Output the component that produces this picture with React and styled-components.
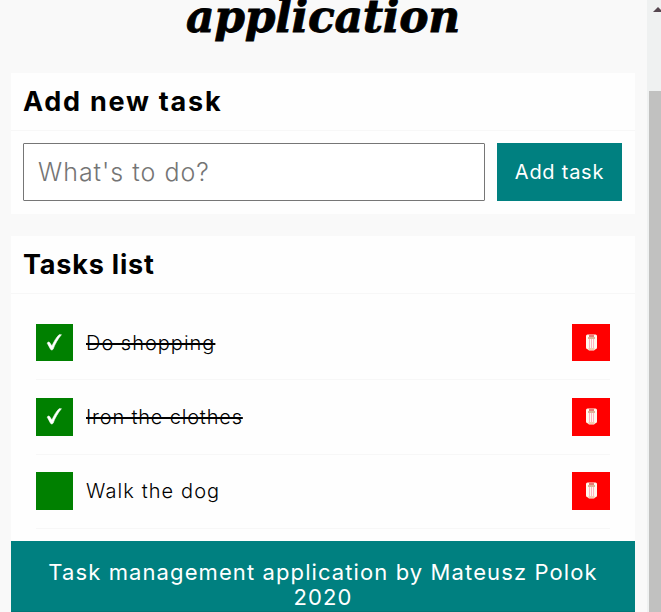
import React, { useState } from "react";
import styled, { createGlobalStyle } from "styled-components";

const GlobalStyle = createGlobalStyle`
  *, *::before, *::after { box-sizing: border-box; }
  html, body { margin: 0; height: 100%; overflow: hidden; }
  body { background: #f9f9f9; color: #000; font-family: Inter, "Open Sans", sans-serif; }
`;

const Viewport = styled.div`
  display: flex;
  height: 612px;
  overflow: hidden;
`;

const Main = styled.main`
  width: 647px;
  flex: none;
  display: flex;
  flex-direction: column;
  padding: 0 12px 0 11px;
`;

const Title = styled.h1`
  margin: 0;
  height: 73px;
  flex: none;
  text-align: center;
  font: italic bold 44px/34px "DejaVu Serif", serif;
  letter-spacing: -0.3px;
  -webkit-text-stroke: 0.8px #000;
  white-space: nowrap;
`;

const Card = styled.section`
  flex: none;
  height: ${(p) => p.$height}px;
  margin-bottom: ${(p) => p.$gap || 0}px;
  background: #fefefe;
`;

const CardTitle = styled.h2`
  margin: 0;
  height: 58px;
  padding-left: 12px;
  border-bottom: 1px solid #f7f7f7;
  font-size: 27px;
  font-weight: 700;
  line-height: 58px;
  letter-spacing: ${(p) => p.$spacing}px;
`;

const Form = styled.form`
  display: flex;
  gap: 12px;
  padding: 12px 13px 0 12px;
`;

const TaskInput = styled.input`
  width: 462px;
  height: 58px;
  border: 1px solid #767676;
  border-radius: 1px;
  padding: 0 14px;
  background: #fff;
  font: 300 25px Inter, sans-serif;
  letter-spacing: 1px;
  &::placeholder { color: #757575; }
`;

const AddButton = styled.button`
  width: 125px;
  height: 58px;
  border: 0;
  padding: 0;
  background: #008080;
  color: #fff;
  font: 400 20px Inter, sans-serif;
  letter-spacing: 0.75px;
`;

const TaskList = styled.ul`
  margin: 0;
  padding: 12.2px 25px 0;
  list-style: none;
`;

const TaskItem = styled.li`
  display: flex;
  align-items: center;
  height: 74.2px;
  padding: 17.5px 0 18px;
  border-bottom: 1px solid #f7f7f7;
`;

const IconButton = styled.button`
  display: flex;
  align-items: center;
  justify-content: center;
  width: ${(p) => p.$width}px;
  height: 37.7px;
  border: 0;
  padding: 0;
  background: ${(p) => p.$color};
  svg { display: block; }
`;

const TaskText = styled.span`
  flex: 1;
  padding-left: 13px;
  font-size: 20px;
  font-weight: 300;
  line-height: 36px;
  & > span {
    letter-spacing: ${(p) => p.$spacing}px;
    text-decoration: ${(p) => (p.$done ? "line-through" : "none")};
    text-decoration-thickness: 2px;
    text-decoration-skip-ink: none;
  }
`;

const Footer = styled.footer`
  flex: none;
  height: 71px;
  padding: 19px 25px 0;
  border-bottom: 1px solid #007676;
  background: #008080;
  color: #fff;
  text-align: center;
  font-size: 22px;
  line-height: 25px;
  letter-spacing: 1.1px;
`;

const Scrollbar = styled.div`
  width: 14px;
  flex: none;
  display: flex;
  flex-direction: column;
  padding: 7px 0 0 2px;
  background: #eff1f1;
  overflow: hidden;
`;

const ScrollUp = styled.svg`
  display: block;
  flex: none;
  margin-left: 4px;
`;

const Thumb = styled.div`
  flex: 1;
  margin-top: 79px;
  background: #c1c1c0;
`;

const Check = () => (
  <svg width="17" height="19" viewBox="0 0 17 19">
    <path d="M1.2 10.1 C2.3 8.4 3.4 8.9 4.1 10.2 L5.9 13.1 C8 8.3 10.3 4.5 13.1 1.7 L15.4 1.7 C11.8 6 9 10.9 7.1 16.2 C6.2 17.2 5.1 17.2 4.5 16.2 Z" fill="#fff" stroke="#fff" strokeWidth="0.6" />
  </svg>
);

const Bin = () => (
  <svg width="11" height="17" viewBox="0 0 11 17">
    <path d="M0 2 Q0 .7 1.5 .5 H9.5 Q11 .7 11 2 V13.5 Q11 15 9.5 15.3 L8 16.4 H3 L1.5 15.3 Q0 15 0 13.5Z" fill="#fff9ee" />
    <path d="M3 2H8" stroke="#d41414" strokeWidth="1.1" />
    <path d="M2 4H9" stroke="#bd7042" strokeWidth="1" />
    <path d="M3.5 5V14M5.5 5V14M7.5 5V14" stroke="#ffb4c3" strokeWidth="1" />
    <path d="M2.5 15H8.5" stroke="#e5a270" strokeWidth="1" />
  </svg>
);

const initialTasks = [
  { name: "Do shopping", done: true, spacing: 1 },
  { name: "Iron the clothes", done: true, spacing: 0.82 },
  { name: "Walk the dog", done: false, spacing: 1.1 },
];

export default function App() {
  const [tasks, setTasks] = useState(initialTasks);
  const [draft, setDraft] = useState("");

  const addTask = (event) => {
    event.preventDefault();
    const name = draft.trim();
    if (!name) return;
    setTasks([...tasks, { name, done: false, spacing: 1 }]);
    setDraft("");
  };
  const toggle = (index) =>
    setTasks(tasks.map((t, i) => (i === index ? { ...t, done: !t.done } : t)));
  const remove = (index) => setTasks(tasks.filter((_, i) => i !== index));

  return (
    <>
      <GlobalStyle />
      <Viewport>
        <Main>
          <Title>application</Title>
          <Card $height={141} $gap={22}>
            <CardTitle $spacing={1.75}>Add new task</CardTitle>
            <Form onSubmit={addTask}>
              <TaskInput placeholder="What's to do?" value={draft} onChange={(e) => setDraft(e.target.value)} />
              <AddButton>Add task</AddButton>
            </Form>
          </Card>
          <Card $height={305}>
            <CardTitle $spacing={0.8}>Tasks list</CardTitle>
            <TaskList>
              {tasks.map((task, index) => (
                <TaskItem key={index}>
                  <IconButton $color="#008000" $width={37} onClick={() => toggle(index)}>
                    {task.done && <Check />}
                  </IconButton>
                  <TaskText $done={task.done} $spacing={task.spacing}><span>{task.name}</span></TaskText>
                  <IconButton $color="#ff0000" $width={38} onClick={() => remove(index)}>
                    <Bin />
                  </IconButton>
                </TaskItem>
              ))}
            </TaskList>
          </Card>
          <Footer>Task management application by Mateusz Polok 2020</Footer>
        </Main>
        <Scrollbar>
          <ScrollUp width="10" height="5" viewBox="0 0 10 5">
            <path d="M0 5 5 0 10 5Z" fill="#55464f" />
          </ScrollUp>
          <Thumb />
        </Scrollbar>
      </Viewport>
    </>
  );
}
